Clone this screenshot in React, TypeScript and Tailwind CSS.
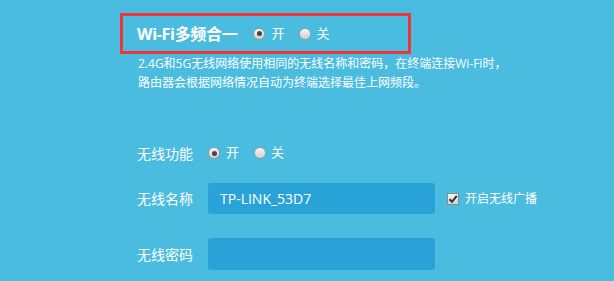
function Radio({ checked }: { checked?: boolean }) {
  return (
    <span className="flex h-[12px] w-[12px] items-center justify-center rounded-full border border-[#9a9a9a] bg-gradient-to-b from-[#f4f4f4] to-[#cfcfcf] shadow-[inset_0_1px_1px_rgba(255,255,255,0.8)]">
      {checked && <span className="h-[5px] w-[5px] rounded-full bg-[#444]" />}
    </span>
  )
}

function RadioPair() {
  return (
    <div className="flex items-center text-[13px] text-white">
      <Radio checked />
      <span className="ml-[6px]">开</span>
      <span className="ml-[15px]">
        <Radio />
      </span>
      <span className="ml-[5px]">关</span>
    </div>
  )
}

export default function App() {
  return (
    <div
      className="h-[281px] w-[614px] overflow-hidden bg-[#4abce0] pl-[120px] pt-[13px] text-white"
      style={{ fontFamily: '"Open Sans", "Noto Sans CJK SC", sans-serif' }}
    >
      {/* Wi-Fi band steering */}
      <div className="flex h-[41px] w-[291px] items-center border-[3px] border-[#f2353b] pl-[14px]">
        <span className="text-[16px] font-bold tracking-[-0.3px]">Wi-Fi多频合一</span>
        <span className="ml-[16px]">
          <RadioPair />
        </span>
      </div>
      <p className="pl-[18px] text-[12px] leading-[19px]">
        2.4G和5G无线网络使用相同的无线名称和密码，在终端连接Wi-Fi时，
        <br />
        路由器会根据网络情况自动为终端选择最佳上网频段。
      </p>

      {/* Wireless settings */}
      <div className="mt-[51px] flex h-[20px] items-center pl-[17px]">
        <span className="w-[71px] text-[14px]">无线功能</span>
        <RadioPair />
      </div>

      <div className="mt-[20px] flex items-center pl-[17px]">
        <span className="w-[71px] text-[14px]">无线名称</span>
        <div className="flex h-[31px] w-[227px] items-center rounded-[3px] bg-[#29a3d7] pl-[12px] text-[14px]">
          TP-LINK_53D7
        </div>
        <span className="ml-[12px] flex h-[12px] w-[12px] items-center justify-center border border-[#8a8a8a] bg-gradient-to-b from-[#f4f4f4] to-[#d2d2d2]">
          <svg width="10" height="10" viewBox="0 0 10 10">
            <path d="M1.5 5.2 L4 7.8 L8.8 1.8" fill="none" stroke="#333" strokeWidth="2" />
          </svg>
        </span>
        <span className="ml-[6px] text-[12px]">开启无线广播</span>
      </div>

      <div className="mt-[24px] flex items-center pl-[17px]">
        <span className="w-[71px] text-[14px]">无线密码</span>
        <div className="h-[32px] w-[227px] rounded-[3px] bg-[#29a3d7]" />
      </div>
    </div>
  )
}
